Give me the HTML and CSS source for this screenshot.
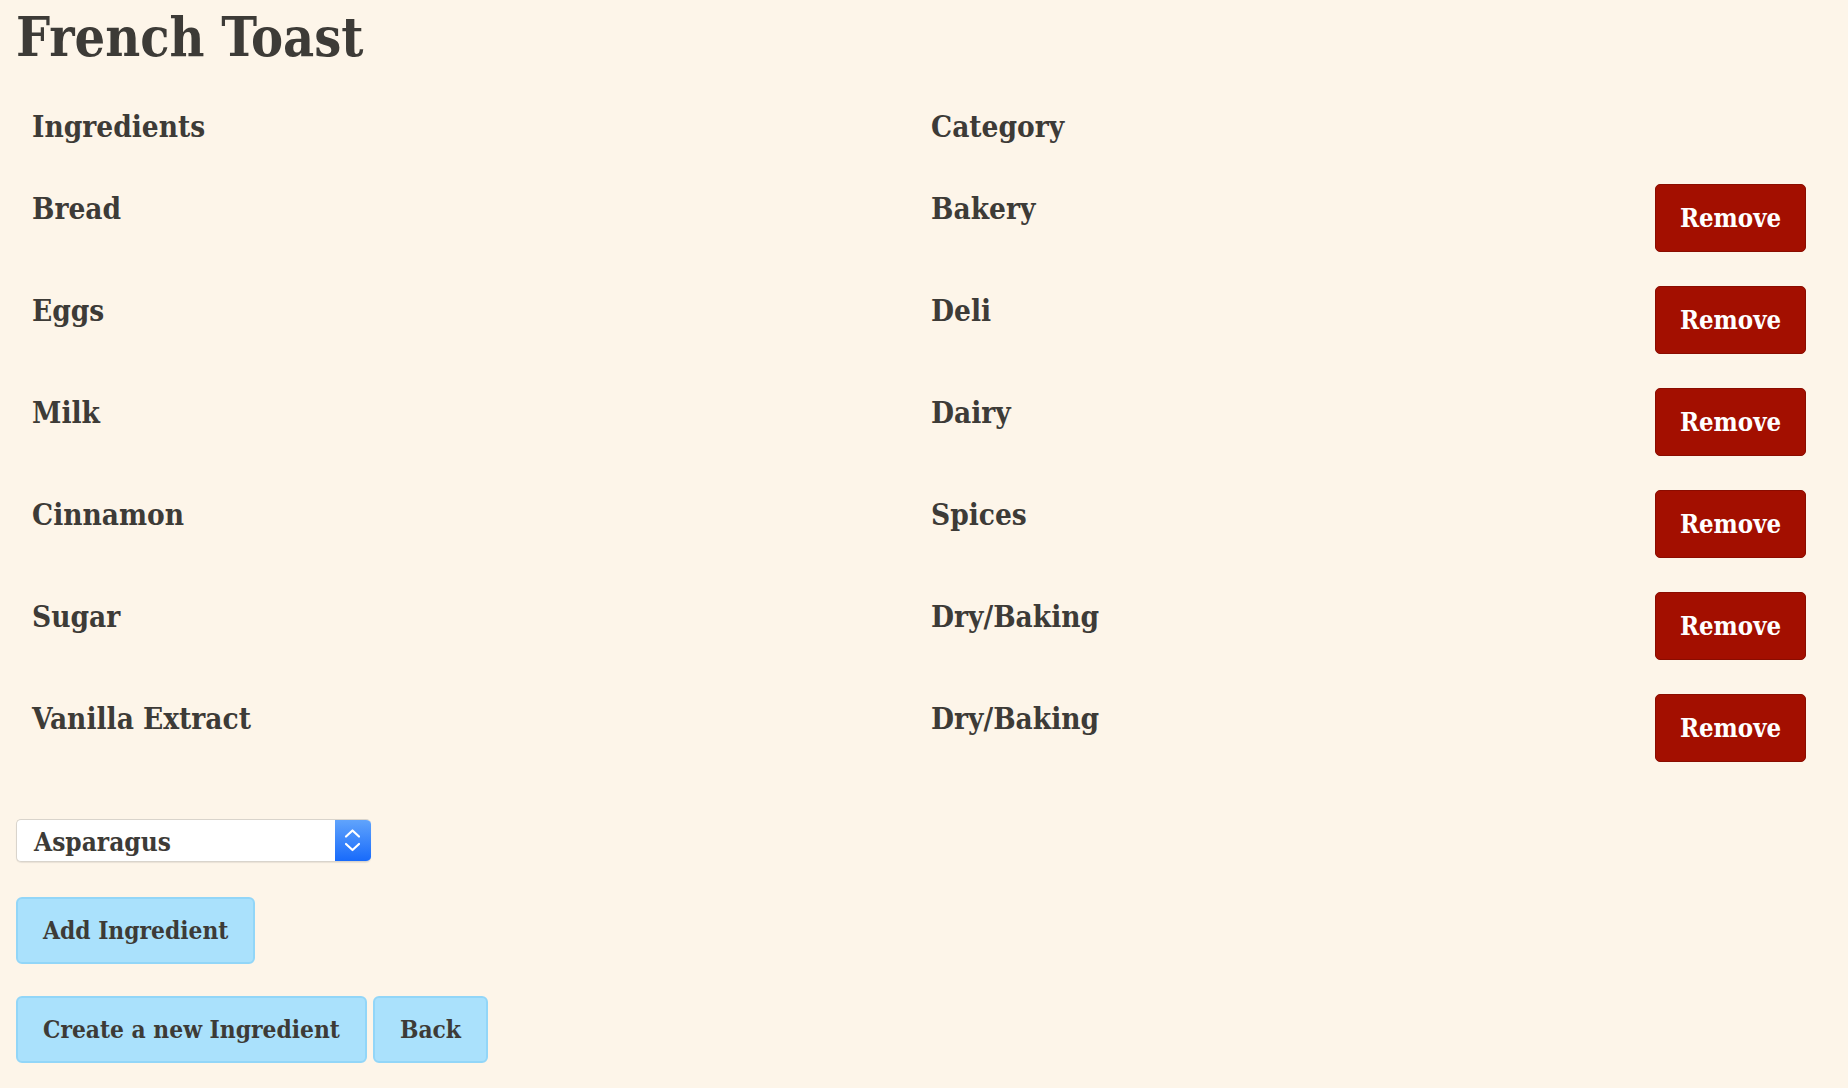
FILE: index.html
```html
<!DOCTYPE html>
<html lang="en">
<head>
<meta charset="utf-8">
<title>French Toast</title>
<link rel="stylesheet" href="styles.css">
</head>
<body>
<div class="page">
  <h1 class="title">French Toast</h1>
  <div class="table">
    <div class="row head">
      <div class="cell">Ingredients</div>
      <div class="cell">Category</div>
      <div class="cell"></div>
    </div>
    <div class="row">
      <div class="cell">Bread</div>
      <div class="cell">Bakery</div>
      <div class="cell act"><button class="btn-remove">Remove</button></div>
    </div>
    <div class="row">
      <div class="cell">Eggs</div>
      <div class="cell">Deli</div>
      <div class="cell act"><button class="btn-remove">Remove</button></div>
    </div>
    <div class="row">
      <div class="cell">Milk</div>
      <div class="cell">Dairy</div>
      <div class="cell act"><button class="btn-remove">Remove</button></div>
    </div>
    <div class="row">
      <div class="cell">Cinnamon</div>
      <div class="cell">Spices</div>
      <div class="cell act"><button class="btn-remove">Remove</button></div>
    </div>
    <div class="row">
      <div class="cell">Sugar</div>
      <div class="cell">Dry/Baking</div>
      <div class="cell act"><button class="btn-remove">Remove</button></div>
    </div>
    <div class="row">
      <div class="cell">Vanilla Extract</div>
      <div class="cell">Dry/Baking</div>
      <div class="cell act"><button class="btn-remove">Remove</button></div>
    </div>
  </div>

  <div class="select">
    <span class="select-text">Asparagus</span>
    <span class="stepper">
      <svg width="36" height="43" viewBox="0 0 36 43" aria-hidden="true">
        <polyline points="11,17.5 17.5,11.5 24,17.5" fill="none" stroke="#ffffff" stroke-width="2.2" stroke-linecap="round" stroke-linejoin="round"/>
        <polyline points="11,25 17.5,31 24,25" fill="none" stroke="#ffffff" stroke-width="2.2" stroke-linecap="round" stroke-linejoin="round"/>
      </svg>
    </span>
  </div>

  <div class="actions add">
    <button class="btn">Add Ingredient</button>
  </div>
  <div class="actions nav">
    <button class="btn">Create a new Ingredient</button>
    <button class="btn">Back</button>
  </div>
</div>
</body>
</html>
```

FILE: styles.css
```css
html, body {
  margin: 0;
  padding: 0;
}

body {
  background: #fdf5e9;
  color: #3d3b37;
  font-family: "DejaVu Serif Condensed", "DejaVu Serif", serif;
  font-weight: bold;
}

.page {
  padding: 0 42px 0 16px;
}

.title {
  margin: 0;
  height: 102px;
  box-sizing: border-box;
  padding-top: 8px;
  font-size: 53.5px;
  line-height: 60px;
  font-weight: bold;
}

.table {
  display: flex;
  flex-direction: column;
}

.row {
  display: grid;
  grid-template-columns: 899px 1fr 151px;
  height: 102px;
  padding-left: 16px;
}

.row.head {
  height: 82px;
}

.cell {
  padding-top: 9px;
  font-size: 29.5px;
  line-height: 32px;
}

.cell.act {
  padding-top: 0;
}

.btn-remove {
  display: block;
  width: 151px;
  height: 68px;
  box-sizing: border-box;
  background: #a30f00;
  border: 1px solid #8a0c00;
  border-radius: 5px;
  color: #ffffff;
  font-family: inherit;
  font-weight: bold;
  font-size: 25.5px;
  padding: 0;
}

.select {
  margin-top: 23px;
  width: 355px;
  height: 43px;
  box-sizing: border-box;
  display: flex;
  align-items: center;
  background: #ffffff;
  border: 1px solid #d9d4cc;
  border-right: none;
  border-radius: 5px;
  box-shadow: 0 1px 1px rgba(0, 0, 0, 0.08);
  overflow: hidden;
}

.select-text {
  flex: 1;
  padding-left: 17px;
  font-size: 26px;
  line-height: 30px;
  padding-top: 3px;
}

.stepper {
  width: 36px;
  height: 43px;
  margin-top: -1px;
  margin-bottom: -1px;
  background: linear-gradient(#62a5fc, #1669fb);
  display: flex;
}

.actions {
  display: flex;
  gap: 6px;
}

.actions.add {
  margin-top: 35px;
}

.actions.nav {
  margin-top: 32px;
}

.btn {
  height: 67px;
  box-sizing: border-box;
  padding: 0 25px;
  background: #aae1fc;
  border: 2px solid #92d6f8;
  border-radius: 6px;
  color: #3d3b37;
  font-family: inherit;
  font-weight: bold;
  font-size: 24.3px;
}
```
